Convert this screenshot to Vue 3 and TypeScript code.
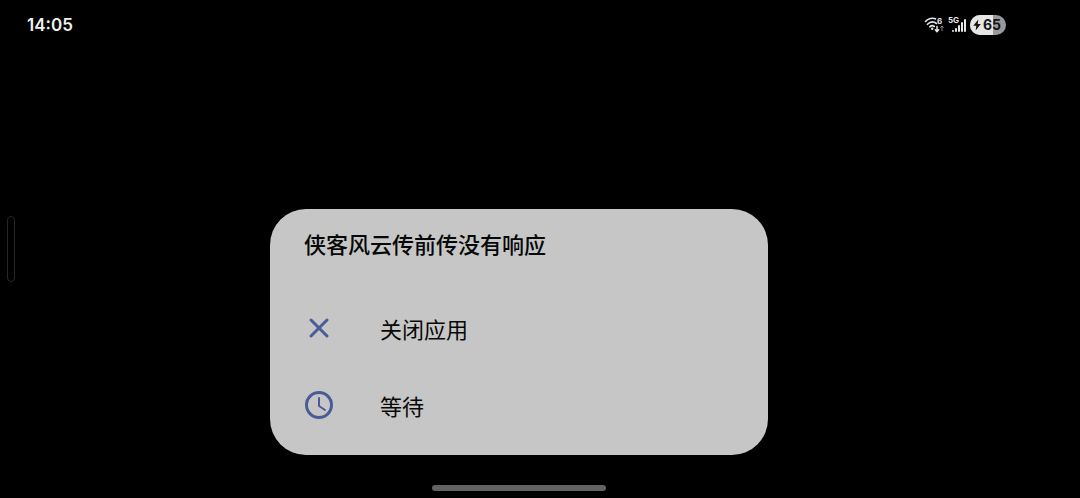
<script setup lang="ts">
import { ref } from 'vue'

const time = '14:05'
const battery = 65
const appName = '侠客风云传前传'
const selected = ref<'close' | 'wait' | null>(null)
</script>

<template>
  <div class="screen">
    <header class="status">
      <time class="clock">{{ time }}</time>
      <div class="indicators">
        <svg class="wifi" viewBox="0 0 20 18" aria-hidden="true">
          <g fill="none" stroke="#e8e8e8" stroke-width="1.6" stroke-linecap="round">
            <path d="M1.500 5.500C4 2.500 8.500 1.500 11.500 2.800" />
            <path d="M3.500 8.300C6 5.700 9.500 5.300 12.500 7.500" />
            <path d="M5.800 10.800C7.200 9.500 9 9.500 10.300 10.500" />
            <path d="M13 10.500v4.700M11.300 13.700l1.700 1.900 1.700-1.900" stroke-width="1.500" />
          </g>
          <circle cx="8.200" cy="12.800" r="1.200" fill="#e8e8e8" />
          <path d="M18 15v-5M16.400 11.700l1.600-1.700 1.600 1.700" fill="none" stroke="#888" />
          <text class="label" x="13" y="8">6</text>
        </svg>
        <svg class="signal" viewBox="0 0 20 18" aria-hidden="true">
          <text class="label" x="1" y="7">5G</text>
          <g fill="#e8e8e8">
            <rect x="5" y="14" width="2" height="2" rx="1" />
            <rect x="8" y="12" width="2" height="4" rx="1" />
            <rect x="11" y="9" width="2" height="7" rx="1" />
            <rect x="14" y="6" width="2" height="10" rx="1" />
            <rect x="17" y="3" width="2" height="13" rx="1" />
          </g>
        </svg>
        <div class="battery">
          <div class="charge" :style="{ width: battery + '%' }"></div>
          <svg class="bolt" viewBox="0 0 8 12" aria-hidden="true">
            <path d="M5.300 0.500L0.300 6.800h3L2.700 11.500 7.800 5H4.700z" fill="#111" />
          </svg>
          <span class="level">{{ battery }}</span>
        </div>
      </div>
    </header>

    <div class="edge-handle"></div>

    <main class="stage">
      <section class="dialog" role="alertdialog" aria-labelledby="dialog-title">
        <h1 id="dialog-title">{{ appName }}没有响应</h1>
        <button type="button" class="option" @click="selected = 'close'">
          <svg class="icon" viewBox="0 0 30 30" aria-hidden="true">
            <path d="M7 7l16 16M23 7L7 23" />
          </svg>
          <span>关闭应用</span>
        </button>
        <button type="button" class="option" @click="selected = 'wait'">
          <svg class="icon" viewBox="0 0 30 30" aria-hidden="true">
            <circle cx="15" cy="15" r="12.500" />
            <path class="hands" d="M15 8v8l6 4" />
          </svg>
          <span>等待</span>
        </button>
      </section>
    </main>

    <footer class="nav"><div class="home-bar"></div></footer>
  </div>
</template>

<style>
body {
  background: #000;
}
</style>

<style scoped>
.screen {
  position: relative;
  box-sizing: border-box;
  min-height: 100vh;
  padding-right: 42px;
  display: flex;
  flex-direction: column;
  background: #000;
  font-family: "Noto Sans CJK SC", sans-serif;
}

.status {
  display: flex;
  align-items: center;
  justify-content: space-between;
  height: 50px;
  padding: 0 32px 0 27px;
  color: #f0f0f0;
}

.clock {
  font: 600 17px/24px Inter, sans-serif;
}

.indicators {
  display: flex;
  align-items: center;
}

.wifi,
.signal {
  width: 20px;
  height: 18px;
  margin-right: 3px;
}

.label {
  font: 700 8px Inter, sans-serif;
  fill: #e8e8e8;
}

.battery {
  position: relative;
  display: flex;
  align-items: center;
  justify-content: center;
  gap: 2px;
  box-sizing: border-box;
  width: 36px;
  height: 20px;
  padding-right: 2px;
  border-radius: 10px;
  overflow: hidden;
  background: #999;
  color: #151515;
}

.charge {
  position: absolute;
  inset: 0 auto 0 0;
  background: #e6e6e6;
}

.bolt {
  position: relative;
  width: 8px;
  height: 12px;
}

.level {
  position: relative;
  font: 700 14px/20px Inter, sans-serif;
}

.edge-handle {
  position: absolute;
  top: 50%;
  left: 7px;
  box-sizing: border-box;
  width: 8px;
  height: 66px;
  margin-top: -33px;
  border: 1px solid #262626;
  border-radius: 4px;
}

.stage {
  flex: 1;
  display: flex;
  align-items: flex-end;
  justify-content: center;
  padding-bottom: 30px;
}

.dialog {
  box-sizing: border-box;
  width: 48%;
  padding: 18px 0 12px;
  border-radius: 36px;
  overflow: hidden;
  background: #c6c6c6;
}

h1 {
  margin: 0 0 30px;
  padding: 0 34px;
  font-size: 22px;
  font-weight: 500;
  line-height: 32px;
  color: #080808;
}

.option {
  display: flex;
  align-items: center;
  gap: 46px;
  width: 100%;
  height: 77px;
  padding: 0 34px;
  border: 0;
  background: none;
  color: #080808;
  font: 400 22px/32px "Noto Sans CJK SC", sans-serif;
  text-align: left;
  cursor: pointer;
}

.icon {
  width: 30px;
  height: 30px;
  fill: none;
  stroke: #4a5c96;
  stroke-width: 3;
  stroke-linecap: round;
  stroke-linejoin: round;
}

.hands {
  stroke-width: 2;
}

.nav {
  display: flex;
  justify-content: center;
  padding-bottom: 7px;
}

.home-bar {
  width: 174px;
  height: 6px;
  border-radius: 3px;
  background: #636363;
}
</style>
